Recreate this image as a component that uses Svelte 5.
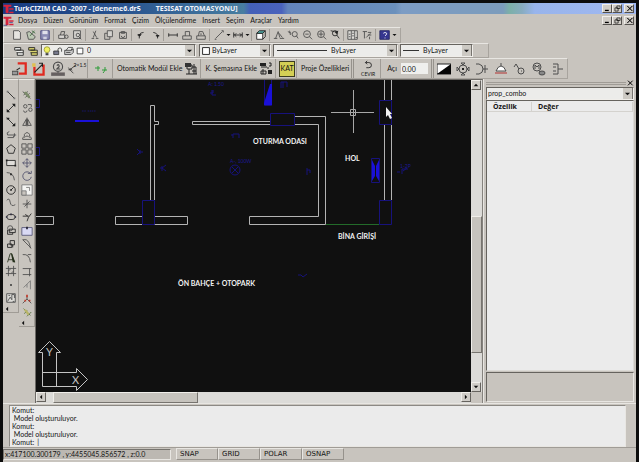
<script lang="ts">
  type Shape = [d: string, stroke?: string, fill?: string];

  const dark = '#4c4c4c';
  const ink = '#222222';

  const icons: Record<string, Shape[]> = {
    logo: [['M0 1H11V4H7V13H3V4H0Z', 'none', '#d8243c'], ['M8 6H14V8H8ZM8 11H14V13H8Z', 'none', '#d8243c'], ['M0 13H5M8 9H13', '#2b3a8c']],
    fresh: [['M3 2H9L11 4V12H3Z', dark, '#e6e4e0']],
    open: [['M2 4L5 3L12 9L10 12H4Z', dark, '#bcc8b4'], ['M8 2L12 5M11 2L6 8', '#3f6b3f']],
    save: [['M2 2H12V12H2Z', '#4a4a80', '#8c8cb4'], ['M4 2H10V6H4Z', 'none', '#e0e0ea'], ['M5 9H9V12H5Z', 'none', '#d0d0e0']],
    print: [['M2 7H9V11H2Z', dark, '#d8d6d2'], ['M4 7L5 3H9L8 7M9 9A2 2 0 1 0 13 9A2 2 0 1 0 9 9', dark]],
    preview: [['M3 2H11V11H3Z', dark, '#d4d2ce'], ['M6 7A2 2 0 1 0 10 7A2 2 0 1 0 6 7M9 9L12 12', dark]],
    cut: [['M8 2L5 10M5 3L9 10M3 11H6M8 11H11', dark]],
    copy: [['M2 5H8V12H2Z', dark], ['M5 2H11V9H5Z', dark, '#d4d2ce']],
    paste: [['M3 4H11V11H3Z', dark], ['M5 3H9V5H5ZM5 8A2 2 0 1 0 9 8', dark]],
    undo: [['M5 11V7Q6 4 10 4M3 7H7', ink], ['M3 6H8L5 9Z', 'none', ink]],
    redo: [['M10 11V7Q8 4 5 4M8 8H12', ink], ['M8 7H12L10 10Z', 'none', ink]],
    ruler: [['M2 5V9M12 5V9M2 7H12', ink]],
    area: [['M2 12H12V8H2ZM5 8V3H10V8', dark]],
    region: [['M2 12H12V8H2ZM4 8L5 3H9L11 8M7 5V7', dark]],
    pen: [['M3 11L11 3M2 12H4M10 2H12V4', dark]],
    span: [['M2 4V10M12 4V10M2 7H12M5 5L3 7L5 9M9 5L11 7L9 9', ink]],
    box3d: [['M2 5H9V12H2Z', ink, '#ffffff'], ['M2 5L5 2H12L9 5Z', ink, '#4fa3a0'], ['M9 12L12 9V2', ink]],
    pan: [['M3 11L6 3L8 10M7 5L11 10M1 11H5M8 11H13', dark]],
    zoomw: [['M6 6A3 3 0 1 0 12 6A3 3 0 1 0 6 6M11 8L13 11M1 3L5 5M3 2L4 7', dark]],
    zooma: [['M3 6A4 4 0 1 0 11 6A4 4 0 1 0 3 6M10 9L13 12M5 6H9', dark]],
    zoomb: [['M3 6A4 4 0 1 0 11 6A4 4 0 1 0 3 6M10 9L13 12M7 3V9M4 6H10', dark]],
    zoomc: [['M4 5A3 3 0 1 0 10 5A3 3 0 1 0 4 5M9 7L12 11M2 2L6 3', ink], ['M6 3L11 2L9 6Z', 'none', ink]],
    grid: [['M1 2H12V12H1Z', dark, '#deddd9'], ['M5 2V12M9 2V12M2 6H4M2 9H4M6 5H8M6 8H8M10 10H12', dark]],
    props: [['M2 3H7M4 3V11M8 4H12M8 7H12M6 10L11 5M10 9V12', dark]],
    help: [['M1 2H12V12H1Z', '#252560', '#363690'], ['M5 5Q7 3 9 5Q9 7 7 8M7 10V11', '#ffffff']],
    layers: [['M2 3H9V6H2ZM4 6H12V9H4M5 9V12H12V9', ink, '#eeeeec']],
    layers2: [['M2 3H9V6H2ZM4 6H12V9H4M5 9V12H12V9', ink, '#d9d36c']],
    bulb: [['M3 5A4 4 0 1 1 11 5Q11 7 9 9H5Q3 7 3 5', '#8a8a20', '#f0f060'], ['M5 10H9V13H5Z', 'none', '#444444']],
    lock: [['M1 7H8V12H1Z', ink, '#77798c'], ['M7 7V4Q10 1 12 4V8', ink]],
    plot: [['M1 6H10L13 4V9L10 12H1Z', ink, '#cccccc'], ['M3 6L6 2H12L10 6M3 9H9', ink]],
    swatch: [['M3 3H11V11H3Z', '#111111', '#ffffff']],
    line: [['M3 3L11 11', ink], ['M2 2H4V4H2ZM10 10H12V12H10Z', 'none', '#777777']],
    ray: [['M3 11L11 3', ink], ['M8 2H12V6ZM2 8V12H6Z', 'none', ink]],
    pline: [['M2 2L11 11', ink], ['M2 2H5V4H2ZM8 12H12V8Z', 'none', ink]],
    arc3: [['M5 3Q1 4 3 7H13M11 5V9M3 10H10V8', dark]],
    polygon: [['M7 2L12 6L10 12H4L2 6Z', ink]],
    rect: [['M2 4H12V10H2Z', ink, '#e0deda'], ['M1 3H3V5H1ZM11 9H13V11H11Z', 'none', ink]],
    arc: [['M2 3Q10 3 11 12', dark], ['M6 4H8V6H6Z', 'none', ink]],
    circle: [['M2 7A5 5 0 1 0 12 7A5 5 0 1 0 2 7M7 7L10 4', ink], ['M6 6H8V8H6Z', 'none', ink]],
    spline: [['M2 4Q5 0 6 6T12 9', dark]],
    ellipse: [['M2 7A5 3 0 1 0 12 7A5 3 0 1 0 2 7', ink], ['M6 3H8V5H6ZM1 6H3V8H1ZM11 6H13V8H11Z', 'none', '#334']],
    insert: [['M3 5A3 3 0 1 1 9 5A3 3 0 1 1 3 5', dark], ['M5 6H12V10H5ZM3 7V12H9V10', ink]],
    block: [['M6 3H11V8H6ZM3 7H8V11H3ZM9 8V11', ink]],
    text: [['M3 12L6 2H8L11 12M4 9H10', '#26301c'], ['M7 2H8L12 12H9Z', 'none', '#26301c']],
    hatch: [['M4 1V13M10 1V13M1 4H13M1 10H13M4 7L7 4M7 10L10 7', dark]],
    point: [['M6 6H8V8H6Z', 'none', ink]],
    image: [['M2 2H12V12H2Z', dark, '#dddcd8'], ['M3 11L6 6L8 9V3H11V7M9 11H11M4 4H6', dark]],
    erase: [['M2 3L11 11M3 7L8 3M5 10L10 5', dark], ['M3 4L6 3L11 9L9 11Z', 'none', '#7c8c6c']],
    copyobj: [['M3 5A2 2 0 1 0 7 5A2 2 0 1 0 3 5M3 10A2 2 0 1 0 7 10M9 9A2 2 0 1 0 13 9A2 2 0 1 0 9 9M8 3H12V6', dark]],
    mirror: [['M2 11L6 4V11ZM12 11L8 4V11Z', dark], ['M7 2V12', ink]],
    offset: [['M2 11H12V9Q9 8 10 5Q7 1 4 5Q5 8 2 9ZM4 9Q7 5 10 9', dark]],
    array: [['M1 1H6V6H1ZM8 1H13V6H8ZM1 8H6V13H1ZM8 8H13V13H8Z', dark]],
    move: [['M7 2V12M2 7H12M5 4L7 2L9 4M5 10L7 12L9 10M4 5L2 7L4 9M10 5L12 7L10 9', '#50506a']],
    rotate: [['M11 4A5 5 0 1 0 12 8M8 4H12V1', '#50506a']],
    scale: [['M1 1H13V13H1Z', '#777777', '#f4f4f2'], ['M1 8H6V13H1Z', '#777777', '#c8c4be'], ['M6 4H10V8', '#777777']],
    trim: [['M7 2V12M2 7H12M4 10L10 4', dark]],
    extend: [['M2 6H9M12 3Q8 7 7 12M5 4L8 6', ink]],
    stretch: [['M1 3H13V12H1Z', '#555577', '#d9d9f4'], ['M6 2H8V5H6Z', 'none', '#223']],
    chamfer: [['M2 2H6Q10 4 11 12M2 2L12 12', dark]],
    fillet: [['M2 3Q10 2 11 12M8 3H12', dark]],
    brk: [['M2 3H12M2 10H12M10 3V12', dark]],
    lengthen: [['M3 10L11 2V12M7 6V10', '#777777']],
    explode: [['M7 7L2 12M7 7L12 12M7 7V4', dark], ['M6 2H8V5H6ZM4 8H6V10H4ZM9 8H11V10H9Z', 'none', '#c03a2a']],
    match: [['M3 3L11 11M4 9L7 5M7 12L12 7', '#4d6b3a'], ['M3 4H6L10 9L8 11Z', 'none', '#b8b468']],
    cable: [['M5 1H13V12H6V10H11V3H5Z', 'none', '#e02a20'], ['M0 9H5V12H0Z', dark, '#999999'], ['M4 8L7 6', ink]],
    cable2: [['M2 5H4V11H10V3H12V13H2Z', 'none', '#e02a20'], ['M3 10L10 3M7 2H10V5', ink], ['M1 2H4V5H1Z', 'none', '#e0c050']],
    numbered: [['M3 5A4 4 0 1 0 11 5A4 4 0 1 0 3 5M6 4Q8 2 8 5L6 7H9M7 9V11', dark], ['M1 10H13V13H1Z', 'none', '#666060']],
    wire: [['M2 5L4 8L13 1M4 8L9 13M2 8H5M5 6L7 9', ink]],
    plus: [['M1 6H6M4 4V9M8 8H13M11 5V8Q10 10 9 11', '#2c9c38']],
    module: [['M3 3H8V7H3ZM10 2V12M2 12H13M5 7V12M8 5H12V12M8 9H12', ink], ['M1 1H7V5H1Z', 'none', '#333333']],
    schema: [['M2 5H8M4 7V12M2 9H7V12H2ZM10 1H12V4H10M9 5V7', ink], ['M1 1H7V4H1ZM9 8H13V12H9Z', 'none', '#222222']],
    turn: [['M4 3H8A3 3 0 0 1 8 9H5M6 1L4 3L6 5', ink]],
    contrast: [['M0 2H14V12H0Z', ink, '#ffffff'], ['M14 2V12H0Z', 'none', '#050505']],
    lamp: [['M3 7A4 4 0 1 0 11 7A4 4 0 1 0 3 7M1 5V9L3 7ZM13 5V9L11 7ZM5 1H9L7 3ZM5 13H9L7 11Z', dark], ['M6 6H8V8H6Z', 'none', ink]],
    socket: [['M1 2H4Q8 3 8 7Q8 11 4 12H1M8 7H13M10 3V11', dark]],
    dome: [['M2 9Q4 4 7 4Q10 4 12 9ZM7 1V4', dark, '#ffffff'], ['M1 11H13', '#b03030']],
    switch: [['M5 9A3 3 0 1 0 11 9A3 3 0 1 0 5 9M6 7L3 2M3 2L1 5M8 9H9', dark]],
    motor: [['M1 5A4 4 0 1 0 9 5A4 4 0 1 0 1 5M3 7V3L5 5L7 3V7M7 9L10 11', dark], ['M7 11A3 2 0 1 0 13 11A3 2 0 1 0 7 11', dark, '#888888']],
    plug: [['M2 2H7V12H2M2 5H5M2 9H5M7 7H12', dark]],
    down: [['M3 5H11L7 9Z', 'none', '#111111']],
    up: [['M3 9H11L7 5Z', 'none', '#111111']],
    left: [['M9 3V11L5 7Z', 'none', '#111111']],
    right: [['M5 3V11L9 7Z', 'none', '#111111']],
    min: [['M3 9H9V11H3Z', 'none', '#000000']],
    restore: [['M6 3H11V7H6ZM3 6H8V11H3Z', '#000000', '#d0ccc6']],
    close: [['M3 3L11 11M11 3L3 11M4 3L12 11M12 3L4 11', '#000000']],
  };

  const menus = ['Dosya', 'Düzen', 'Görünüm', 'Format', 'Çizim', 'Ölçülendirme', 'Insert', 'Seçim', 'Araçlar', 'Yardım'];

  const standard = [
    ['fresh', 'open', 'save'],
    ['print', 'preview'],
    ['cut', 'copy', 'paste'],
    ['undo', 'redo'],
    ['ruler', 'area', 'region'],
    ['pen', '>', 'span', '>'],
    ['box3d'],
    ['pan', 'zoomw', 'zooma', 'zoomb', 'zoomc'],
    ['grid', 'props'],
    ['help', '>'],
  ];

  const draw = ['line', 'ray', 'pline', 'arc3', 'polygon', 'rect', 'arc', 'circle', 'spline', 'ellipse', 'insert', 'block', 'text', 'hatch', 'point', 'image'];
  const modify = ['erase', 'copyobj', 'mirror', 'offset', 'array', 'move', 'rotate', 'scale', 'trim', 'extend', 'stretch', 'chamfer', 'fillet', 'brk', 'lengthen', 'explode', 'match'];
  const symbols = ['contrast', 'lamp', 'socket', 'dome', 'switch', 'motor', 'plug'];
  const modes = ['SNAP', 'GRID', 'POLAR', 'OSNAP'];
  const log = ['Komut:', ' Model oluşturuluyor.', 'Komut:', ' Model oluşturuluyor.'];

  let angle = $state('0.00');
  let command = $state('|');
</script>

{#snippet icon(name: string)}
  <svg class="icon" viewBox="0 0 14 14" aria-hidden="true">
    {#each icons[name] as [d, stroke, fill]}
      <path {d} stroke={stroke ?? dark} fill={fill ?? 'none'} />
    {/each}
  </svg>
{/snippet}

{#snippet windowButtons()}
  <div class="winbtns">
    <button aria-label="Minimize">{@render icon('min')}</button>
    <button aria-label="Restore">{@render icon('restore')}</button>
    <button class="apart" aria-label="Close">{@render icon('close')}</button>
  </div>
{/snippet}

<div class="app">
  <header class="title">
    {@render icon('logo')}
    <span>TurkCIZIM CAD -2007 - [deneme6.dr5</span>
    <span class="module-name">TESISAT OTOMASYONU]</span>
    {@render windowButtons()}
  </header>

  <nav class="menu">
    {@render icon('logo')}
    {#each menus as item}
      <button>{item}</button>
    {/each}
    {@render windowButtons()}
  </nav>

  <div class="bar standard">
    {#each standard as group}
      <div class="group">
        {#each group as name}
          {#if name === '>'}
            <button class="caret" aria-label="More">{@render icon('down')}</button>
          {:else}
            <button aria-label={name}>{@render icon(name)}</button>
          {/if}
        {/each}
      </div>
    {/each}
  </div>

  <div class="bar layerbar">
    <button aria-label="Layers">{@render icon('layers')}</button>
    <button aria-label="Layer states">{@render icon('layers2')}</button>
    <div class="combo layer">
      <span class="lead">
        {@render icon('bulb')}{@render icon('lock')}{@render icon('plot')}{@render icon('swatch')}
      </span>
      <select aria-label="Layer"><option>0</option></select>
      <span class="drop">{@render icon('down')}</span>
    </div>
    <div class="combo color">
      <span class="lead">{@render icon('swatch')}</span>
      <select aria-label="Color"><option>ByLayer</option></select>
      <span class="drop">{@render icon('down')}</span>
    </div>
    <div class="combo linetype">
      <span class="lead rule"></span>
      <select aria-label="Line type"><option>ByLayer</option></select>
      <span class="drop">{@render icon('down')}</span>
    </div>
    <div class="combo weight">
      <span class="lead rule"></span>
      <select aria-label="Line weight"><option>ByLayer</option></select>
      <span class="drop">{@render icon('down')}</span>
    </div>
  </div>

  <div class="bar modulebar">
    <div class="group wide">
      <button aria-label="Cable">{@render icon('cable')}</button>
      <button aria-label="Route">{@render icon('cable2')}</button>
      <button aria-label="Number">{@render icon('numbered')}</button>
      <button class="wire" aria-label="Wire size">{@render icon('wire')}<small>2×1.5</small></button>
    </div>
    <div class="group plus"><button aria-label="Add">{@render icon('plus')}</button></div>
    <div class="group"><button class="label">Otomatik Modül Ekle {@render icon('module')}</button></div>
    <div class="group"><button class="label">K. Şemasına Ekle {@render icon('schema')}</button></div>
    <div class="group"><button class="kat">KAT</button></div>
    <div class="group"><button class="label">Proje Özellikleri</button></div>
    <div class="group grip turn"><button aria-label="Çevir">{@render icon('turn')}<small>CEVIR</small></button></div>
    <div class="group">
      <label class="angle">Açı <input bind:value={angle} /></label>
    </div>
    <div class="group grip symbols">
      {#each symbols as name}
        <button aria-label={name}>{@render icon(name)}</button>
      {/each}
    </div>
  </div>

  <main>
    <div class="tools draw">
      {#each draw as name}
        <button aria-label={name}>{@render icon(name)}</button>
      {/each}
      <span class="more">{@render icon('left')}</span>
    </div>
    <div class="tools modify">
      {#each modify as name}
        <button aria-label={name}>{@render icon(name)}</button>
      {/each}
      <span class="more">{@render icon('left')}</span>
    </div>

    <div class="view">
      <svg class="canvas" role="img" aria-label="Kat planı">
        <g transform="translate(-36 -80)">
          <path
            class="wall"
            d="M36 216.5H53.5V224.5H36M142 216.5H115.5V224.5H142M154 216.5H187.5V224.5H154M150.5 200V105.5H154.5V121.5H158.5V124.5H154.5V200M270 121.5H192.5V124.5H270M294 116.5H325.5V224.5H249.5V216.5H318.5V124.5H294M384.5 80V100M391.5 80V100M384.5 125V200M391.5 125V200"
          />
          <path class="door" d="M326 224.5H379" />
          <path
            class="column"
            d="M142.5 200.5H154.5V224.5H142.5ZM270.5 113.5H294.5V125.5H270.5ZM379.5 100.5H391.5V124.5H379.5ZM379.5 200.5H391.5V224.5H379.5ZM264.5 80V105.5H271.5V80M36 99.5H39.5V107.5H36M36 147.5H39.5V155.5H36M371.5 158.5H379.5V182.5H371.5Z"
          />
          <path class="fixture" d="M75 120H99V122H75ZM264 105V103L270 84H272V105ZM372 160L375 166V176L372 181ZM379 160L376 166V176L379 181Z" />
          <path
            class="device"
            d="M230 170A5 5 0 1 0 240 170A5 5 0 1 0 230 170M232 167L238 173M238 167L232 173M233 138V134H239V138M231 135H233M137 149L140 152L137 155M140 150V154M143 152H140M166 165L162 168L166 171M162 166V171M160 168H162M210 93H213V90M212 90V95H216M307 168V175M307 170H310V173M397 172H400M402 174V169H408M403 171L407 168M298 275H301L303 277L307 274M281 88V82H287V87M283 82V88"
          />
          <g class="tag">
            <text x="82" y="114">** ****</text>
            <text x="208" y="86">A: 1.50</text>
            <text x="230" y="163">A-, 100W</text>
            <text x="400" y="168">1-2P</text>
          </g>
          <g class="room">
            <text x="253" y="144">OTURMA ODASI</text>
            <text x="345" y="161">HOL</text>
            <text x="338" y="239">BİNA GİRİŞİ</text>
            <text x="178" y="286">ÖN BAHÇE + OTOPARK</text>
          </g>
          <path class="cross" d="M331 112.5H374M353.5 90V133M350.5 109.5H355.5V115.5H350.5Z" />
          <path class="pointer" d="M386 107V117L388 115L390 119L392 118L390 114H392Z" />
          <path class="ucs" d="M42.5 386.5V352.5H38.5L49.5 341.5L60.5 352.5H56.5V386.5M42.5 372.5H76.5V368.5L87.5 379.5L76.5 390.5V386.5H42.5" />
          <g class="axis">
            <text x="46" y="356">Y</text>
            <text x="72" y="384">X</text>
          </g>
        </g>
      </svg>
      <div class="scroll vertical">
        <button aria-label="Up">{@render icon('up')}</button>
        <div class="track"><div class="thumb"></div></div>
        <button aria-label="Down">{@render icon('down')}</button>
      </div>
      <div class="scroll horizontal">
        <button aria-label="Left">{@render icon('left')}</button>
        <div class="track"><div class="thumb"></div></div>
        <button aria-label="Right">{@render icon('right')}</button>
      </div>
    </div>

    <aside>
      <div class="handle"><span></span><button aria-label="Close panel">{@render icon('close')}</button></div>
      <div class="combo prop">
        <select aria-label="Property set"><option>prop_combo</option></select>
        <span class="drop">{@render icon('down')}</span>
      </div>
      <div class="sheet">
        <table>
          <thead><tr><th>Özellik</th><th>Değer</th></tr></thead>
        </table>
      </div>
      <div class="hint"></div>
    </aside>
  </main>

  <section class="command">
    <div class="console">
      {#each log as entry}
        <div class="entry">{entry}</div>
      {/each}
      <label>Komut: <input bind:value={command} /></label>
    </div>
  </section>

  <footer>
    <div class="coords">x:417100.300179 , y:4455045.856572 , z:0.0</div>
    {#each modes as mode}
      <button>{mode}</button>
    {/each}
  </footer>
</div>

<style>
  :global(body) {
    margin: 0;
    background: #0c0c0c;
  }

  .app {
    --face: #c8c4be;
    --light: #e8e6e2;
    --shade: #86837e;
    --ui: Lato, 'Liberation Sans', Arial, sans-serif;
    box-sizing: border-box;
    min-height: 100vh;
    display: flex;
    flex-direction: column;
    border: 3px solid #0c0c0c;
    border-bottom: 0;
    background: var(--face);
    color: #141414;
    font: 7px/9px var(--ui);
  }

  button,
  input,
  select {
    box-sizing: border-box;
    margin: 0;
    padding: 0;
    border: 0;
    border-radius: 0;
    background: none;
    color: inherit;
    font: inherit;
  }

  .icon {
    display: block;
    flex: none;
    width: 12px;
    height: 12px;
  }

  .title {
    display: flex;
    align-items: center;
    height: 11px;
    background: linear-gradient(90deg, #173a80 0%, #2a5590 20%, #487ea0 38%, #4460b8 39%, #4a62bc 44%, #6384bc 45%, #6b90bc 62%, #7c9cc4 63%, #7c9cbc 79%, #7cb0a8 80%, #88acc0 82%, #98b4ec 84%, #a0b8f0 100%);
    color: #f2f4fa;
    font: bold 7px/10px 'Noto Sans', sans-serif;
    white-space: pre;
  }

  .module-name {
    margin-left: 15px;
  }

  .winbtns {
    display: flex;
    margin-left: auto;
    color: #000;
  }

  .winbtns button {
    display: flex;
    align-items: center;
    justify-content: center;
    width: 10px;
    height: 9px;
    border: 1px solid;
    border-color: #f0eeea #55524e #55524e #f0eeea;
    background: #d0ccc6;
  }

  .winbtns .icon {
    width: 9px;
    height: 9px;
  }

  .winbtns .apart {
    margin: 0 2px;
  }

  .menu {
    display: flex;
    align-items: center;
    height: 13px;
  }

  .title > .icon,
  .menu > .icon {
    width: 11px;
    height: 10px;
  }

  .menu > .icon {
    margin-right: 4px;
  }

  .menu > button {
    margin-right: 6px;
  }

  .bar {
    display: flex;
    align-items: center;
    align-self: flex-start;
    box-sizing: border-box;
    border: 1px solid;
    border-color: var(--light) #a8a49e #a8a49e var(--light);
  }

  .bar button {
    display: flex;
    align-items: center;
    justify-content: center;
  }

  .group {
    display: flex;
    align-items: center;
  }

  .group + .group {
    padding-left: 2px;
    margin-left: 1px;
    border-left: 1px solid #a09c96;
  }

  .standard {
    height: 16px;
    padding: 0 3px 0 6px;
  }

  .standard button {
    width: 14px;
  }

  .standard .caret {
    width: 5px;
  }

  .caret .icon {
    width: 7px;
  }

  .layerbar {
    height: 15px;
    gap: 2px;
    padding: 0 15px 0 9px;
  }

  .combo {
    position: relative;
    display: flex;
    align-items: center;
    box-sizing: border-box;
    height: 13px;
    border: 1px solid;
    border-color: #66635e #f0eeea #f0eeea #66635e;
    background: #ececea;
  }

  .combo select {
    flex: 1;
    min-width: 0;
    height: 11px;
    appearance: none;
    outline: none;
  }

  .lead {
    display: flex;
    gap: 1px;
  }

  .rule {
    height: 1px;
    margin: 0 4px 0 3px;
    background: #333;
  }

  .drop {
    position: absolute;
    top: 0;
    right: 0;
    bottom: 0;
    display: flex;
    align-items: center;
    justify-content: center;
    width: 9px;
    border-right: 1px solid #77746f;
    background: #ccc9c3;
    pointer-events: none;
  }

  .drop .icon {
    width: 9px;
  }

  .layer {
    width: 155px;
    margin-right: 1px;
  }

  .layer .lead {
    padding-right: 2px;
  }

  .layer .lead .icon {
    width: 10px;
  }

  .color {
    width: 72px;
  }

  .linetype {
    width: 125px;
  }

  .linetype .rule {
    width: 50px;
  }

  .weight {
    width: 73px;
  }

  .weight .rule {
    width: 16px;
    margin-left: 2px;
  }

  .modulebar {
    height: 21px;
    padding: 0 1px 0 6px;
  }

  .modulebar .icon {
    width: 14px;
    height: 14px;
  }

  .modulebar .group {
    height: 19px;
  }

  .modulebar .group + .group {
    padding-left: 3px;
  }

  .wide button {
    width: 19px;
  }

  .modulebar .wide .icon {
    width: 16px;
    height: 16px;
  }

  .modulebar .wide .wire .icon {
    width: 10px;
  }

  small {
    font-size: 5px;
    line-height: 5px;
  }

  .wire small {
    margin: 0 0 7px -3px;
  }

  .plus button {
    width: 20px;
  }

  .label {
    gap: 2px;
    padding: 0 1px;
    white-space: nowrap;
  }

  .kat {
    width: 16px;
    height: 16px;
    border: 1px solid #3c3c20;
    background: #d4cf55;
  }

  .modulebar .grip {
    border-left: 3px double #96928c;
  }

  .turn button {
    flex-direction: column;
    width: 22px;
  }

  .modulebar .turn .icon {
    height: 12px;
  }

  .angle {
    display: flex;
    align-items: center;
    gap: 4px;
    padding: 0 2px 0 3px;
  }

  .angle input {
    width: 27px;
    height: 11px;
    padding-left: 1px;
    background: #efefed;
  }

  .symbols {
    gap: 4px;
  }

  .symbols button {
    width: 15px;
  }

  main {
    display: flex;
    flex: 1;
    min-height: 0;
  }

  .tools {
    display: flex;
    flex-direction: column;
    align-self: flex-start;
    box-sizing: border-box;
    width: 16px;
    padding-top: 8px;
    border-right: 1px solid #a09c96;
    border-bottom: 1px solid #a09c96;
    border-top: 1px solid var(--light);
  }

  .tools button {
    display: flex;
    flex: 1;
    align-items: center;
    justify-content: center;
  }

  .draw {
    height: 234px;
  }

  .modify {
    height: 248px;
  }

  .more {
    height: 7px;
  }

  .more .icon {
    width: 8px;
    height: 8px;
  }

  .view {
    flex: 1;
    display: grid;
    grid-template: 1fr 11px / 1fr 11px;
    min-width: 0;
    border: 1px solid #6c6965;
    border-right-color: var(--shade);
    border-bottom: 0;
  }

  .canvas {
    display: block;
    width: 100%;
    height: 100%;
    background: #101010;
    overflow: hidden;
  }

  .canvas path {
    fill: none;
    stroke-width: 1;
  }

  .canvas .wall {
    stroke: #b4b4b4;
  }

  .canvas .door {
    stroke: #236b2a;
  }

  .canvas .column {
    stroke: #17127c;
  }

  .canvas .fixture {
    fill: #1a10d8;
  }

  .canvas .device {
    stroke: #16127a;
  }

  .canvas .cross {
    stroke: #a8a8a8;
  }

  .canvas .pointer {
    fill: #f4f4f4;
  }

  .canvas .ucs {
    stroke: #c4c4c4;
  }

  .tag {
    fill: #1c1894;
    font-size: 5px;
  }

  .room {
    fill: #f2f2f2;
    font: bold 7px var(--ui);
  }

  .axis {
    fill: #c4c4c4;
    font-size: 11px;
  }

  .scroll {
    display: flex;
    background: #dcdbd8;
  }

  .vertical {
    flex-direction: column;
  }

  .scroll button {
    display: flex;
    flex: none;
    align-items: center;
    justify-content: center;
    width: 10px;
    height: 10px;
    border: 1px solid;
    border-color: #f0eeea #66635e #66635e #f0eeea;
    background: #d0cdc8;
  }

  .scroll .icon {
    width: 8px;
    height: 8px;
  }

  .track {
    display: flex;
    flex: 1;
  }

  .vertical .track {
    flex-direction: column;
  }

  .thumb {
    box-sizing: border-box;
    border: 1px solid;
    border-color: #f0eeea #77746f #77746f #f0eeea;
    background: #c6c3bd;
  }

  .vertical .thumb {
    height: 47%;
    margin-top: 126px;
  }

  .horizontal .thumb {
    width: 35%;
    margin-left: 7px;
  }

  aside {
    display: flex;
    flex-direction: column;
    box-sizing: border-box;
    width: 153px;
    padding: 0 2px 1px;
    border-left: 1px solid var(--light);
  }

  .handle {
    display: flex;
    align-items: center;
    height: 8px;
  }

  .handle span {
    flex: 1;
    height: 1px;
    border: solid #a09c96;
    border-width: 1px 0;
  }

  .handle .icon {
    width: 8px;
    height: 8px;
  }

  .prop select {
    padding-left: 1px;
  }

  .sheet {
    flex: 1;
    padding-top: 1px;
    border: 1px solid;
    border-color: #66635e #dcdad6 #dcdad6 #66635e;
    background: #ebebeb;
  }

  table {
    width: 100%;
    border-collapse: collapse;
    table-layout: fixed;
  }

  th {
    height: 9px;
    padding: 0 0 0 6px;
    border-right: 1px solid #d4d2ce;
    border-bottom: 1px solid #d4d2ce;
    text-align: left;
    font: bold 7px/9px 'Open Sans', 'Noto Sans', sans-serif;
  }

  th:first-child {
    width: 38px;
  }

  .hint {
    height: 28px;
    margin-top: 1px;
    border: 1px solid;
    border-color: #66635e #e8e6e2 #e8e6e2 #66635e;
  }

  .command {
    padding: 1px 10px 0 6px;
    border-top: 1px solid var(--light);
  }

  .console {
    display: flex;
    flex-direction: column;
    padding: 0 2px;
    border: 1px solid;
    border-color: #8c8984 #e8e6e2 #e8e6e2 #8c8984;
    background: #ebebeb;
    line-height: 8px;
  }

  .entry {
    white-space: pre;
  }

  .console label {
    display: flex;
  }

  .console input {
    flex: 1;
    height: 8px;
    margin-left: 3px;
    outline: none;
  }

  footer {
    display: flex;
    align-items: center;
    height: 15px;
    box-sizing: border-box;
    padding-bottom: 2px;
    border-top: 1px solid #a09c96;
  }

  .coords {
    width: 165px;
    margin-right: 5px;
    padding-left: 1px;
    border: 1px solid;
    border-color: #77746f #e8e6e2 #e8e6e2 #77746f;
    background: #bcb8b2;
  }

  footer button {
    height: 12px;
    width: 42px;
    padding-left: 3px;
    border: 1px solid;
    border-color: var(--light) #96928c #96928c var(--light);
    text-align: left;
    font: 7px/9px 'DejaVu Sans', sans-serif;
  }
</style>
